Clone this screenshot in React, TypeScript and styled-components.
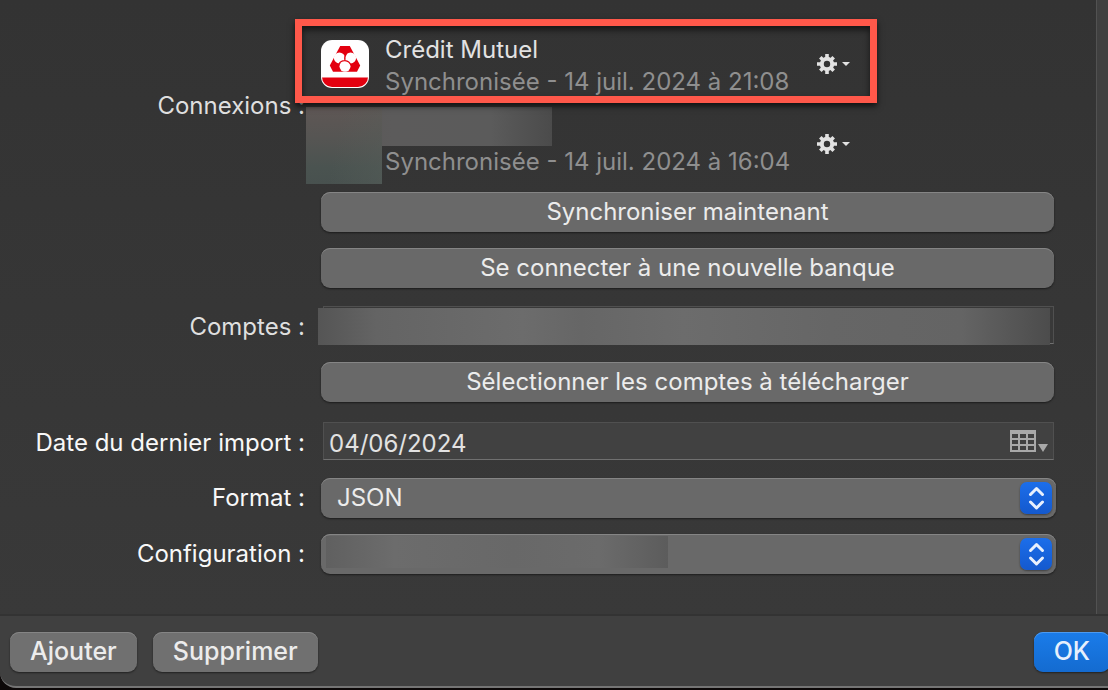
import React from "react";
import styled, { createGlobalStyle, css } from "styled-components";

const GlobalStyle = createGlobalStyle`
  *, *::before, *::after { box-sizing: border-box; }
  body {
    margin: 0;
    background: #0c0808;
    overflow-x: hidden;
  }
  body, button, input, select {
    font-family: Inter, "Liberation Sans", sans-serif;
    font-size: 24px;
    line-height: 32px;
  }
`;

const Window = styled.div`
  display: flex;
  flex-direction: column;
  min-height: calc(100vh - 2px);
  border-bottom: 2px solid #757575;
  border-bottom-left-radius: 16px;
  overflow: hidden;
  background: #404040;
`;

const Body = styled.main`
  display: flex;
  flex: 1;
  background: linear-gradient(#333333, #393939);
  border-bottom: 2px solid #333333;
`;

const ScrollTrack = styled.div`
  width: 12px;
  background: #404040;
  border-left: 1px solid #525252;
`;

const Form = styled.form`
  flex: 1;
  display: flex;
  flex-direction: column;
  gap: 16px;
  padding: 24px 40px 40px 0;
`;

const Row = styled.div<{ $height?: number }>`
  display: grid;
  grid-template-columns: 305px minmax(0, 1fr);
  column-gap: 16px;
  align-items: center;
  min-height: ${(p) => p.$height ?? 40}px;
`;

const ConnectionsRow = styled(Row)`
  position: relative;
  margin-bottom: -8px;
`;

const labelStyle = css`
  text-align: right;
  white-space: nowrap;
`;

const Caption = styled.span`
  ${labelStyle}
  padding-top: 4px;
  color: #dfdfdf;
`;

const Label = styled.label<{ $drop?: boolean }>`
  ${labelStyle}
  padding-top: ${(p) => (p.$drop ? 6 : 0)}px;
  color: #f8f8f8;
`;

const Field = styled.div<{ $wide?: boolean }>`
  position: relative;
  display: flex;
  margin-right: ${(p) => (p.$wide ? 0 : 2)}px;
`;

const ConnectionList = styled.ul`
  list-style: none;
  margin: 0;
  padding: 0;
`;

const Connection = styled.li`
  position: relative;
  display: flex;
  align-items: center;
  height: 80px;
`;

const LogoSlot = styled.span`
  width: 64px;
  height: 48px;
`;

const ConnectionText = styled.div`
  display: flex;
  flex-direction: column;
  width: 432px;
  height: 68px;
  justify-content: flex-end;
  white-space: nowrap;
`;

const BankName = styled.span`
  color: #e2e2e2;
`;

const SyncStatus = styled.span`
  color: #8f8f8f;
`;

const GearButton = styled.button`
  display: flex;
  align-items: center;
  gap: 5px;
  padding: 0;
  border: 0;
  background: none;
  color: #e2e2e2;
`;

const Highlight = styled.div`
  position: absolute;
  top: -5px;
  left: 295px;
  width: 582px;
  height: 84px;
  border: 7px solid #ff584a;
  box-shadow: 0 3px 6px rgba(0, 0, 0, 0.7), inset 0 4px 6px rgba(0, 0, 0, 0.6);
  pointer-events: none;
`;

const BlurredName = styled.div`
  position: absolute;
  top: 3px;
  left: -15px;
  width: 246px;
  height: 39px;
  background: linear-gradient(90deg, #5a5554, #5c5b5b 35%, #5b5b5b 75%, #4b4b4b);
`;

const BlurredLogo = styled.div`
  position: absolute;
  top: 3px;
  left: -15px;
  width: 76px;
  height: 77px;
  background: linear-gradient(100deg, #46504c00 40%, #58605b66),
    linear-gradient(#5f5755, #565553 40%, #4a5350 80%, #48514f);
`;

const BlurredAccounts = styled.div`
  position: absolute;
  top: 1px;
  left: -6px;
  right: 3px;
  height: 37px;
  background: linear-gradient(90deg, #555555, #646464 8%, #6c6c6c 28%, #666666 36%, #6c6c6c 50%, #666666 70%, #646464 88%, #4c4c4c);
`;

const BlurredConfig = styled.div`
  position: absolute;
  top: 2px;
  left: 5px;
  width: 342px;
  height: 32px;
  background: linear-gradient(90deg, #606060, #6c6c6c 20%, #686868 55%, #6b6b6b 80%, #5c5c5c);
  pointer-events: none;
`;

const raised = css`
  height: 40px;
  border: 0;
  border-radius: 9px;
  background: #696969;
  color: #ececec;
  box-shadow: inset 0 1px 0 #858585, 0 1px 2px rgba(0, 0, 0, 0.5);
`;

const PushButton = styled.button`
  ${raised}
  flex: 1;
  padding: 0 20px;
`;

const Well = styled.div`
  position: relative;
  flex: 1;
  display: flex;
  align-items: center;
  height: 38px;
  margin-left: 2px;
  background: #414141;
  border: 1px solid #505050;
  border-bottom-color: #707070;
`;

const AccountsWell = styled(Well)`
  background: #393939;
`;

const DateWell = styled(Well)`
  margin-top: 2px;
`;

const DateInput = styled.input`
  flex: 1;
  min-width: 0;
  height: 36px;
  padding: 4px 5px 0;
  border: 0;
  outline: 0;
  background: none;
  color: #e2e2e2;
`;

const CalendarButton = styled.button`
  display: flex;
  padding: 0 5px 0 0;
  border: 0;
  background: none;
`;

const Select = styled.select`
  ${raised}
  flex: 1;
  appearance: none;
  padding: 0 48px 0 16px;
`;

const Chip = styled.span`
  position: absolute;
  top: 4px;
  right: 4px;
  display: flex;
  width: 32px;
  height: 32px;
  border-radius: 7px;
  background: linear-gradient(#1c6eea, #1459ce);
  box-shadow: 0 1px 2px rgba(0, 0, 0, 0.4);
  pointer-events: none;
`;

const Footer = styled.footer`
  display: flex;
  gap: 16px;
  padding: 16px 0 14px 10px;
`;

const FooterButton = styled.button`
  ${raised}
  padding: 0 20px 2px;
  font-size: 25px;
  font-weight: 500;
  background: #707070;
`;

const DefaultButton = styled(FooterButton)`
  margin-left: auto;
  margin-right: -2px;
  color: #e6f0fd;
  background: linear-gradient(#1a7cea, #146bd0);
  box-shadow: inset 0 1px 0 #4c9af0, 0 1px 2px rgba(0, 0, 0, 0.5);
`;

const CreditMutuelLogo = () => (
  <svg width="48" height="48" viewBox="0 0 48 48" aria-hidden="true">
    <clipPath id="tile">
      <rect x="1" y="1" width="46" height="46" rx="10" />
    </clipPath>
    <rect width="48" height="48" rx="11" fill="#fff" />
    <rect y="37.5" width="48" height="10" fill="#e3000f" clipPath="url(#tile)" />
    <path d="M19.2 6h9.600L39.200 25.600l-3.200 6.200H12l-3.200-6.200z" fill="#e3000f" />
    <g fill="#fff">
      <circle cx="18.400" cy="17.900" r="5.500" />
      <circle cx="29.600" cy="17.900" r="5.500" />
      <circle cx="24" cy="26.300" r="5.500" />
      <circle cx="24" cy="20.600" r="2" />
    </g>
    <path
      d="M24 20.600c-.8-2.600-.2-4.800 1.400-6.800M24 20.600c-2.600-.1-4.800 1-6 3.400M24 20.600c2.600.2 5 1.800 5.800 4.600"
      fill="none"
      stroke="#e3000f"
      strokeWidth="1.100"
    />
  </svg>
);

const GearIcon = () => (
  <>
    <svg width="20" height="20" viewBox="0 0 20 20" aria-hidden="true">
      <circle cx="10" cy="10" r="5.2" fill="none" stroke="currentColor" strokeWidth="4" />
      <g stroke="currentColor" strokeWidth="3.6">
        <path d="M10 0v5M10 15v5M0 10h5M15 10h5" />
        <path d="M3.300 3.300l3 3M13.700 13.700l3 3M3.300 16.700l3-3M13.700 6.300l3-3" />
      </g>
    </svg>
    <svg width="8" height="4" viewBox="0 0 8 4" aria-hidden="true">
      <path d="M0 0h8L4 4z" fill="currentColor" />
    </svg>
  </>
);

const CalendarIcon = () => (
  <svg width="38" height="24" viewBox="0 0 38 24" aria-hidden="true">
    <path
      d="M0 1h26v22H0zM2 5v4h6V5zM10 5v4h6V5zM18 5v4h6V5zM2 11v4h6v-4zM10 11v4h6v-4zM18 11v4h6v-4zM2 17v4h6v-4zM10 17v4h6v-4zM18 17v4h6v-4z"
      fill="#a9a9a9"
      fillRule="evenodd"
    />
    <path d="M28 15h10l-5 8z" fill="#a9a9a9" />
  </svg>
);

const Stepper = () => (
  <Chip>
    <svg width="32" height="32" viewBox="0 0 32 32" aria-hidden="true">
      <path
        d="M10.500 12.500L16.500 6.500l6 6M10.500 20l6 6 6-6"
        fill="none"
        stroke="#e8f0fd"
        strokeWidth="3"
        strokeLinecap="round"
        strokeLinejoin="round"
      />
    </svg>
  </Chip>
);

export default function App() {
  return (
    <>
      <GlobalStyle />
      <Window>
        <Body>
          <Form onSubmit={(e) => e.preventDefault()}>
            <ConnectionsRow>
              <Caption>Connexions :</Caption>
              <ConnectionList>
                <Connection>
                  <LogoSlot>
                    <CreditMutuelLogo />
                  </LogoSlot>
                  <ConnectionText>
                    <BankName>Crédit Mutuel</BankName>
                    <SyncStatus>Synchronisée - 14 juil. 2024 à 21:08</SyncStatus>
                  </ConnectionText>
                  <GearButton type="button" aria-label="Options">
                    <GearIcon />
                  </GearButton>
                </Connection>
                <Connection>
                  <BlurredName />
                  <BlurredLogo />
                  <LogoSlot />
                  <ConnectionText>
                    <SyncStatus>Synchronisée - 14 juil. 2024 à 16:04</SyncStatus>
                  </ConnectionText>
                  <GearButton type="button" aria-label="Options">
                    <GearIcon />
                  </GearButton>
                </Connection>
              </ConnectionList>
              <Highlight />
            </ConnectionsRow>
            <Row>
              <span />
              <Field>
                <PushButton type="button">Synchroniser maintenant</PushButton>
              </Field>
            </Row>
            <Row>
              <span />
              <Field>
                <PushButton type="button">Se connecter à une nouvelle banque</PushButton>
              </Field>
            </Row>
            <Row $height={42}>
              <Caption>Comptes :</Caption>
              <Field>
                <AccountsWell>
                  <BlurredAccounts />
                </AccountsWell>
              </Field>
            </Row>
            <Row>
              <span />
              <Field>
                <PushButton type="button">Sélectionner les comptes à télécharger</PushButton>
              </Field>
            </Row>
            <Row $height={44}>
              <Label htmlFor="last-import" $drop>
                Date du dernier import :
              </Label>
              <Field>
                <DateWell>
                  <DateInput id="last-import" type="text" defaultValue="04/06/2024" />
                  <CalendarButton type="button" aria-label="Calendrier">
                    <CalendarIcon />
                  </CalendarButton>
                </DateWell>
              </Field>
            </Row>
            <Row>
              <Label htmlFor="format">Format :</Label>
              <Field $wide>
                <Select id="format" defaultValue="JSON">
                  <option>JSON</option>
                </Select>
                <Stepper />
              </Field>
            </Row>
            <Row>
              <Label htmlFor="configuration">Configuration :</Label>
              <Field $wide>
                <Select id="configuration" />
                <BlurredConfig />
                <Stepper />
              </Field>
            </Row>
          </Form>
          <ScrollTrack />
        </Body>
        <Footer>
          <FooterButton type="button">Ajouter</FooterButton>
          <FooterButton type="button">Supprimer</FooterButton>
          <DefaultButton type="button">OK</DefaultButton>
        </Footer>
      </Window>
    </>
  );
}
